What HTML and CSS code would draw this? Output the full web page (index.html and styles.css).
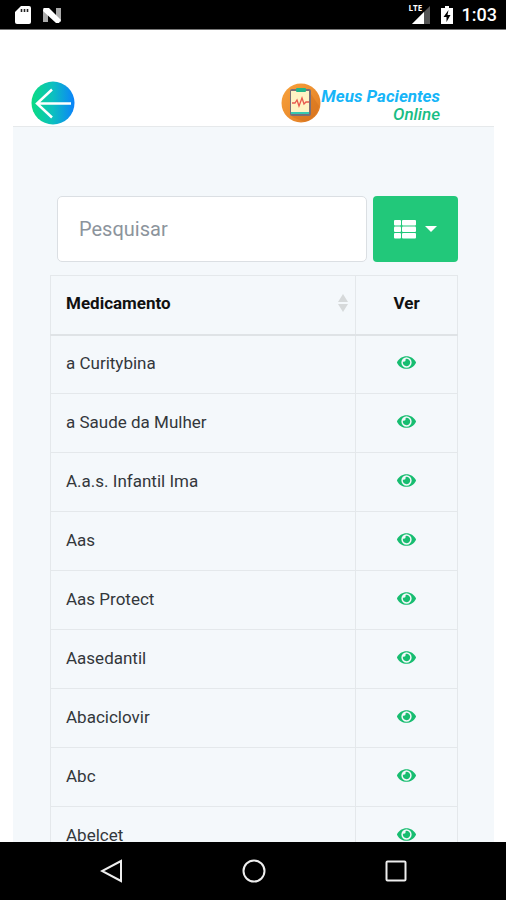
FILE: index.html
```html
<!DOCTYPE html>
<html lang="pt-BR">
<head>
<meta charset="utf-8">
<meta name="viewport" content="width=device-width, initial-scale=1">
<title>Meus Pacientes Online</title>
<link rel="stylesheet" href="styles.css">
</head>
<body>
<svg class="defs" aria-hidden="true">
  <symbol id="eye" viewBox="0 0 576 512">
    <path d="M288 144a110.94 110.94 0 0 0-31.24 5 55.4 55.4 0 0 1 7.24 27 56 56 0 0 1-56 56 55.4 55.4 0 0 1-27-7.24A111.71 111.71 0 1 0 288 144z"/>
    <path fill-rule="evenodd" d="M572.520 241.400C518.290 135.590 410.930 64 288 64S57.680 135.640 3.480 241.410a32.350 32.350 0 0 0 0 29.190C57.710 376.410 165.070 448 288 448s230.320-71.640 284.520-177.410a32.350 32.350 0 0 0 0-29.190zM288 412a156 156 0 1 1 0-312 156 156 0 0 1 0 312z"/>
  </symbol>
</svg>
<div class="status">
  <svg class="status-icon" viewBox="0 0 18 20" aria-hidden="true"><path fill="#fff" d="M7 1h8q2 0 2 2v14q0 2-2 2H3q-2 0-2-2V7z"/><path stroke="#222" stroke-width="1.6" d="M7.500 4v3M10.500 4v3M13.500 4v3"/></svg>
  <svg class="status-icon" viewBox="0 0 20 20" aria-hidden="true"><path fill="#aaa" d="M1 3l5 3v11H1zM14 3h5v14l-5-3z"/><path fill="#fff" d="M2 3h5l12 12-2 3h-3L1 6z"/></svg>
  <span class="status-space"></span>
  <span class="signal"><span class="lte">LTE</span><svg class="signal-icon" viewBox="0 0 19 18" aria-hidden="true"><path fill="#555" d="M18 0v18H0z"/><path fill="#fff" d="M12 6v12H0z"/></svg></span>
  <svg class="battery" viewBox="0 0 12 20" aria-hidden="true"><path fill="#fff" d="M4 1h4v2h4v16H0V3h4z"/><path d="M7.500 5L2.500 12h3v5l4-7h-3z"/></svg>
  <span class="clock">1:03</span>
</div>
<main class="app">
  <header class="header">
    <a class="back" href="#" aria-label="Voltar"><svg viewBox="0 0 44 44" aria-hidden="true">
      <defs><linearGradient id="back-fill"><stop offset="0" stop-color="#0bdc82"/><stop offset=".5" stop-color="#0cbfc0"/><stop offset="1" stop-color="#0b82fb"/></linearGradient></defs>
      <circle cx="22" cy="22" r="21.500" fill="url(#back-fill)"/><path d="M40 22.500H6M21 8.500L6 22.500l15 14" fill="none" stroke="#fff" stroke-width="2.500"/></svg></a>
    <a class="brand" href="#">
      <svg class="brand-icon" viewBox="0 0 40 40" aria-hidden="true">
        <defs><linearGradient id="orb" x1="0" y1="0" x2="1" y2="1"><stop offset="0" stop-color="#f9a33c"/><stop offset="1" stop-color="#e07a22"/></linearGradient></defs>
        <circle cx="20" cy="20" r="19.500" fill="url(#orb)"/>
        <path d="M30 11l8 12q-2 12-14 16l-13-5z" fill="#c96818" opacity=".35"/>
        <rect x="9" y="6" width="21" height="27" rx="2" fill="#7a6f78"/>
        <rect x="10" y="8" width="18" height="22" fill="#fff3c4"/>
        <path d="M10 29h18v2H10z" fill="#35c9b0"/><rect x="15" y="5" width="10" height="4" rx="1" fill="#22b58a"/>
        <path d="M11 20h3l2-3 2 6 3-8 2 6 2-2h3" fill="none" stroke="#e8584d" stroke-width="1.300"/>
      </svg>
      <span class="brand-text"><span class="brand-first">Meus Pacientes</span><span class="brand-second">Online</span></span>
    </a>
  </header>
  <section class="panel">
    <div class="toolbar">
      <input class="search" type="search" placeholder="Pesquisar" aria-label="Pesquisar">
      <button class="columns" type="button" aria-label="Colunas">
        <svg class="list-icon" viewBox="0 0 22 19" aria-hidden="true"><g fill="#fff"><rect width="7" height="5.500" rx="1"/><rect x="8" width="14" height="5.500" rx="1"/><rect y="6.500" width="7" height="5.500" rx="1"/><rect x="8" y="6.500" width="14" height="5.500" rx="1"/><rect y="13" width="7" height="5.500" rx="1"/><rect x="8" y="13" width="14" height="5.500" rx="1"/></g></svg>
        <span class="caret"></span>
      </button>
    </div>
    <table class="table">
      <thead><tr><th scope="col"><div class="sort">Medicamento<svg class="sort-icon" viewBox="0 0 10 18" aria-hidden="true"><path fill="#d6d9da" d="M5 0l5 8H0zM0 10h10l-5 8z"/></svg></div></th><th class="view" scope="col">Ver</th></tr></thead>
      <tbody>
        <tr><td>a Curitybina</td><td class="view"><a href="#" aria-label="Ver a Curitybina"><svg class="eye"><use href="#eye"/></svg></a></td></tr>
        <tr><td>a Saude da Mulher</td><td class="view"><a href="#" aria-label="Ver a Saude da Mulher"><svg class="eye"><use href="#eye"/></svg></a></td></tr>
        <tr><td>A.a.s. Infantil Ima</td><td class="view"><a href="#" aria-label="Ver A.a.s. Infantil Ima"><svg class="eye"><use href="#eye"/></svg></a></td></tr>
        <tr><td>Aas</td><td class="view"><a href="#" aria-label="Ver Aas"><svg class="eye"><use href="#eye"/></svg></a></td></tr>
        <tr><td>Aas Protect</td><td class="view"><a href="#" aria-label="Ver Aas Protect"><svg class="eye"><use href="#eye"/></svg></a></td></tr>
        <tr><td>Aasedantil</td><td class="view"><a href="#" aria-label="Ver Aasedantil"><svg class="eye"><use href="#eye"/></svg></a></td></tr>
        <tr><td>Abaciclovir</td><td class="view"><a href="#" aria-label="Ver Abaciclovir"><svg class="eye"><use href="#eye"/></svg></a></td></tr>
        <tr><td>Abc</td><td class="view"><a href="#" aria-label="Ver Abc"><svg class="eye"><use href="#eye"/></svg></a></td></tr>
        <tr><td>Abelcet</td><td class="view"><a href="#" aria-label="Ver Abelcet"><svg class="eye"><use href="#eye"/></svg></a></td></tr>
      </tbody>
    </table>
  </section>
</main>
<nav class="system">
  <button type="button" aria-label="Voltar"><svg viewBox="0 0 24 24" aria-hidden="true"><path d="M21 2v20L2 12z"/></svg></button>
  <button type="button" aria-label="Início"><svg viewBox="0 0 24 24" aria-hidden="true"><circle cx="12" cy="12" r="10.500"/></svg></button>
  <button type="button" aria-label="Recentes"><svg viewBox="0 0 24 24" aria-hidden="true"><rect x="2.500" y="2.500" width="19" height="19" rx="1"/></svg></button>
</nav>
</body>
</html>
```
FILE: styles.css
```css
* { box-sizing: border-box; }
body {
  margin: 0;
  height: 100vh;
  display: flex;
  flex-direction: column;
  overflow: hidden;
  background: #fff;
  color: #33373b;
  font-family: Roboto, "Liberation Sans", sans-serif;
  font-size: 17px;
}
svg { display: block; }
.defs { position: absolute; width: 0; height: 0; }

.status {
  flex: none;
  display: flex;
  align-items: center;
  height: 30px;
  padding: 0 9px 0 13px;
  background: #000;
  border-bottom: 1px solid #777;
  color: #fff;
}
.status-icon { width: 20px; height: 20px; margin-right: 9px; }
.status-space { flex: 1; }
.signal { position: relative; margin-right: 10px; }
.signal-icon { width: 19px; height: 18px; }
.lte {
  position: absolute;
  top: -3px;
  left: -3px;
  font-family: "Open Sans", Roboto, sans-serif;
  font-size: 8px;
  line-height: 10px;
  font-weight: 700;
}
.battery { width: 12px; height: 20px; margin-right: 9px; }
.clock { font-size: 18px; font-weight: 500; }

.app {
  flex: 1;
  min-height: 0;
  display: flex;
  flex-direction: column;
  overflow: hidden;
  padding: 0 12px 0 13px;
}
.header {
  flex: none;
  display: flex;
  align-items: flex-end;
  justify-content: space-between;
  padding: 51px 54px 0 18px;
  border-bottom: 1px solid #e6e9eb;
}
.back svg { width: 44px; height: 44px; }
.back { padding-bottom: 1px; }
.brand {
  display: flex;
  align-items: center;
  padding-bottom: 3px;
  text-decoration: none;
  font-size: 17px;
  line-height: 18px;
  font-style: italic;
}
.brand-icon { width: 40px; height: 40px; }
.brand-text { display: flex; flex-direction: column; padding-top: 4px; }
.brand-first { color: #16b5f8; font-weight: 700; }
.brand-second { align-self: flex-end; color: #19bd84; font-weight: 500; }

.panel {
  flex: 1;
  min-height: 0;
  padding: 69px 36px 0 37px;
  background: #f4f8fb;
}
.toolbar { display: flex; gap: 6px; padding-left: 7px; margin-bottom: 13px; }
.search {
  flex: 1;
  min-width: 0;
  height: 66px;
  padding: 0 21px;
  border: 1px solid #dbdfe3;
  border-radius: 5px;
  background: #fff;
  font: inherit;
  font-size: 20px;
}
.search::placeholder { color: #8c949c; opacity: 1; }
.columns {
  display: flex;
  align-items: center;
  justify-content: center;
  gap: 9px;
  width: 85px;
  height: 66px;
  padding: 0;
  border: 0;
  border-radius: 4px;
  background: #22c87a;
}
.list-icon { width: 22px; height: 19px; }
.caret { border: 6px solid transparent; border-top-color: #fff; border-bottom: 0; }

.table { width: 100%; border-collapse: collapse; }
.table th, .table td {
  height: 59px;
  padding: 0 15px 3px;
  border: 1px solid #e4e8eb;
  text-align: left;
  line-height: 24px;
}
.table th { border-bottom: 2px solid #dfe3e6; color: #111; font-weight: 700; }
.table .view { width: 25%; text-align: center; }
.sort { display: flex; align-items: center; justify-content: space-between; margin-right: -8px; }
.sort-icon { width: 10px; height: 18px; }
.eye { width: 19px; height: 17px; margin: 0 auto; fill: #17bd70; }

.system {
  flex: none;
  display: flex;
  align-items: center;
  justify-content: center;
  gap: 118px;
  height: 58px;
  padding-left: 2px;
  background: #000;
}
.system button { padding: 0; border: 0; background: none; }
.system svg { width: 24px; height: 24px; fill: none; stroke: #eee; stroke-width: 2; }
```
